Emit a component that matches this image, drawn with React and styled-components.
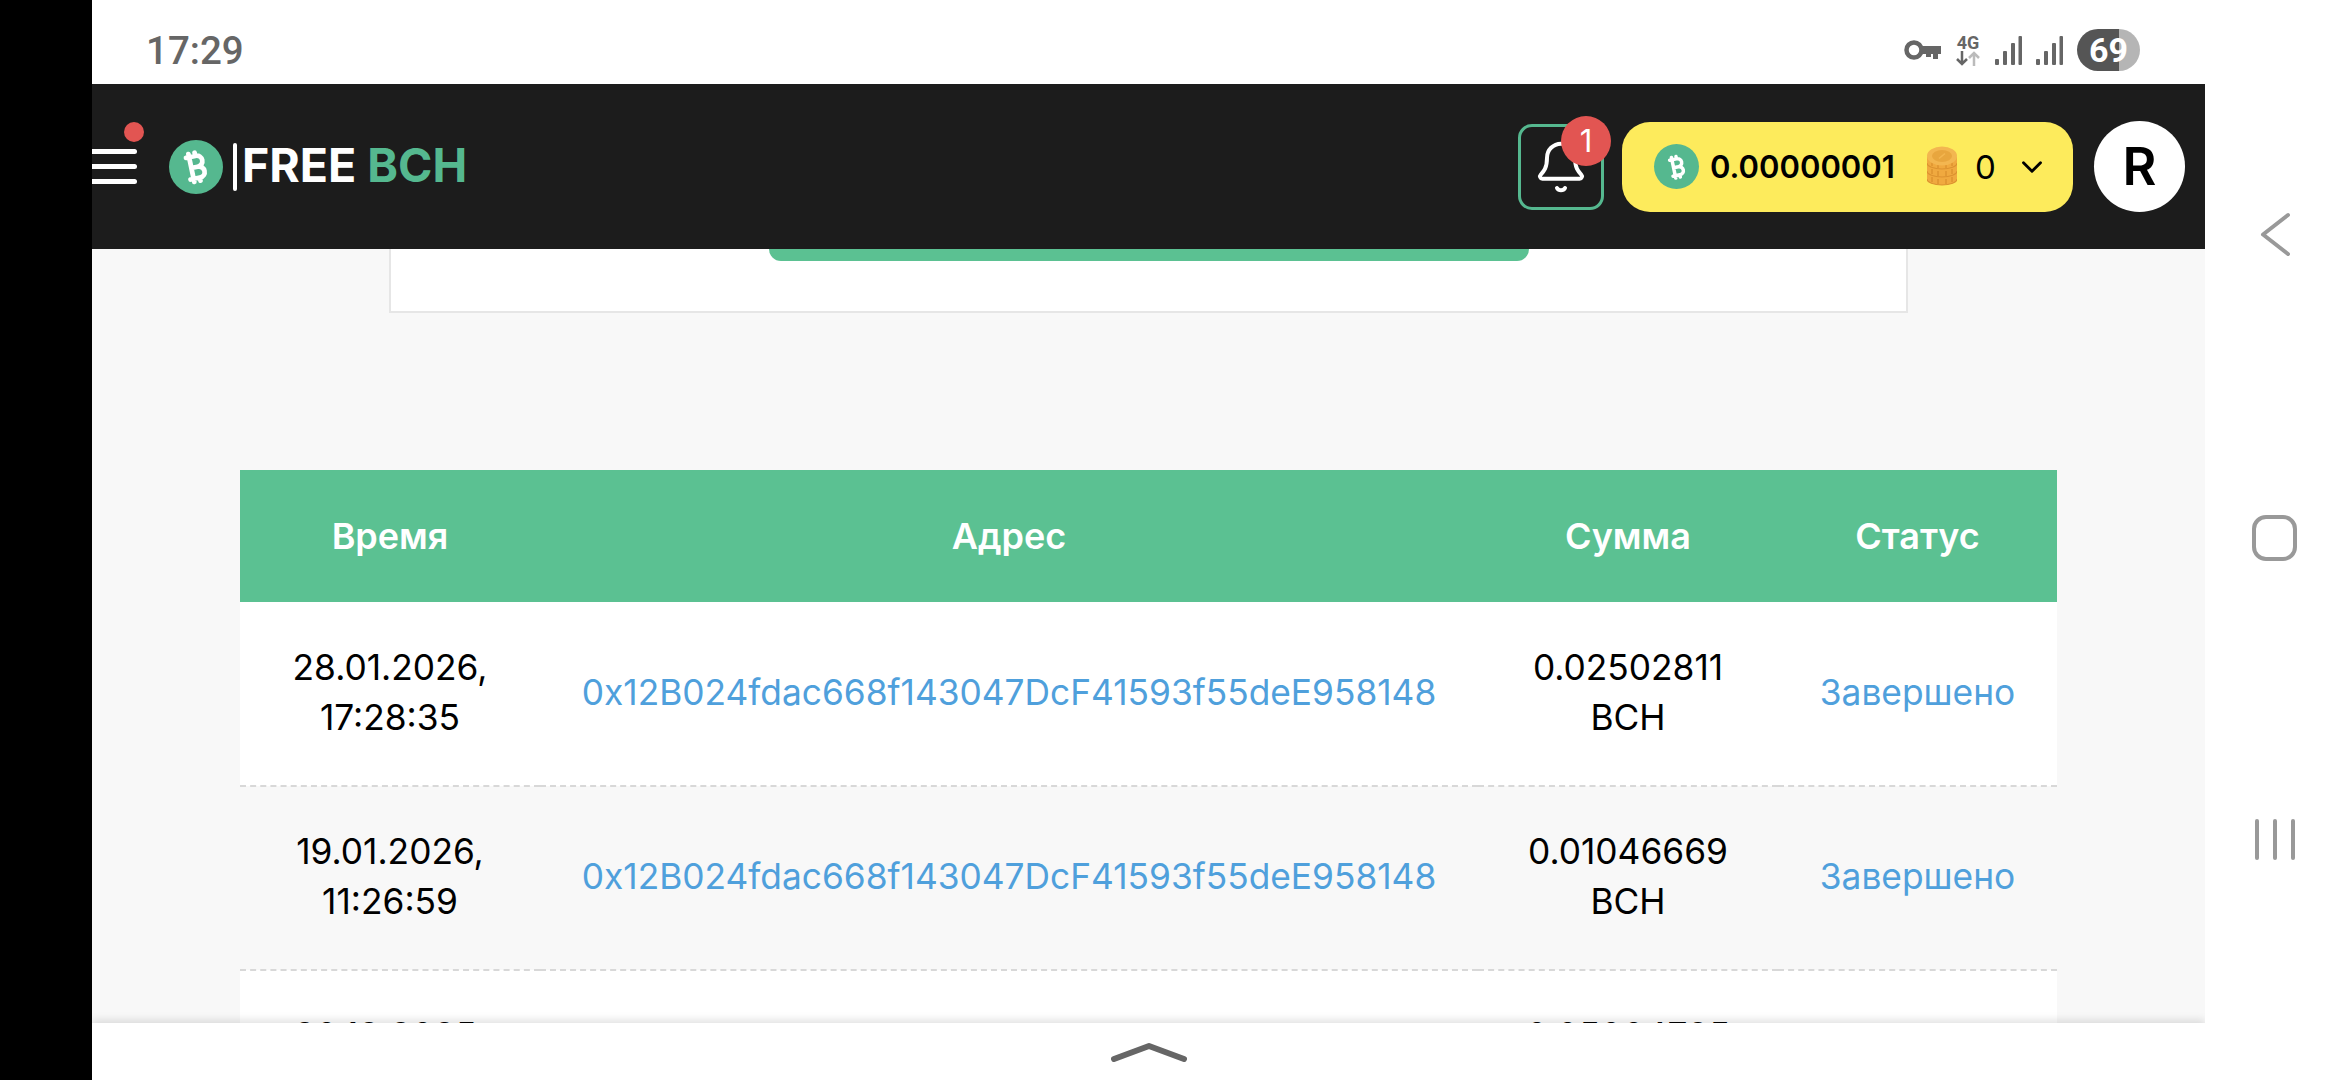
import React from "react";
import styled, { createGlobalStyle } from "styled-components";
import { Bell, ChevronDown } from "lucide-react";

const rows = [
  { date: "28.01.2026,", time: "17:28:35", amount: "0.02502811" },
  { date: "19.01.2026,", time: "11:26:59", amount: "0.01046669" },
  { date: "20.12.2025,", time: "10:12:44", amount: "0.05004785" },
];
const address = "0x12B024fdac668f143047DcF41593f55deE958148";

function BchMark({ size }) {
  return (
    <svg width={size} height={size} viewBox="0 0 24 24" fill="none" stroke="#fff" strokeWidth="3" strokeLinecap="round" strokeLinejoin="round" style={{ transform: "rotate(-22deg)" }}>
      <path d="M11.767 19.089c4.924.868 6.14-6.025 1.216-6.894m-1.216 6.894L5.86 18.047m5.908 1.042-.347 1.97m1.563-8.864c4.924.869 6.14-6.025 1.215-6.893m-1.215 6.893-3.94-.694m5.155-6.2L8.29 4.26m5.908 1.042.348-1.97M7.48 20.364l3.126-17.727" />
    </svg>
  );
}

function KeyIcon() {
  return (
    <svg width="37" height="20" viewBox="0 0 37 20" fill="none">
      <circle cx="10" cy="10" r="7.5" stroke="#666" strokeWidth="4.5" />
      <path d="M18 6h19v8h-3v5h-5v-5h-2v3h-5v-3h-4z" fill="#666" />
    </svg>
  );
}

function NetworkIcon() {
  return (
    <NetworkBox>
      <NetworkLabel>4G</NetworkLabel>
      <svg width="26" height="15" viewBox="0 0 26 15" fill="none" strokeWidth="2.5">
        <path d="M7 0v13M2 8l5 5 5-5" stroke="#666" />
        <path d="M19 15V2M14 7l5-5 5 5" stroke="#bbb" />
      </svg>
    </NetworkBox>
  );
}

function SignalIcon() {
  return (
    <svg width="27" height="29" viewBox="0 0 27 29" fill="#666">
      <rect x="0" y="23" width="4" height="6" rx="1" />
      <rect x="8" y="15" width="4" height="14" rx="1" />
      <rect x="16" y="7" width="4" height="22" rx="1" />
      <rect x="23.5" y="0" width="3.5" height="29" rx="1" />
    </svg>
  );
}

function CoinsIcon() {
  return (
    <svg width="30" height="41" viewBox="0 0 30 41">
      {[27, 19, 11].map((y) => (
        <g key={y}>
          <path d={`M0 ${y}v6a15 6 0 0 0 30 0v-6z`} fill="#f0a93f" />
          <path d={`M0 ${y + 6}a15 6 0 0 0 30 0`} fill="none" stroke="#dc9230" strokeWidth="1.2" />
          <path d={`M5 ${y + 4}v5M11 ${y + 6}v5M19 ${y + 6}v5M25 ${y + 4}v5`} stroke="#dc9230" strokeWidth="1.4" />
        </g>
      ))}
      <ellipse cx="15" cy="10" rx="15" ry="9.5" fill="#f3b650" />
      <ellipse cx="15" cy="10" rx="10" ry="6" fill="#e8a63e" />
      <path d="M12 12.5 18 7.5" stroke="#f3b650" strokeWidth="1.6" />
    </svg>
  );
}

export default function App() {
  return (
    <>
      <GlobalStyle />
      <Screen>
        <LeftStrip />
        <Main>
          <StatusBar>
            <Clock>17:29</Clock>
            <StatusIcons>
              <KeyIcon />
              <NetworkIcon />
              <SignalGroup>
                <SignalIcon />
                <SignalIcon />
              </SignalGroup>
              <Battery>69</Battery>
            </StatusIcons>
          </StatusBar>
          <Header>
            <LeftGroup>
              <Burger>
                <BurgerDot />
                <BurgerLine />
                <BurgerLine />
                <BurgerLine />
              </Burger>
              <Logo>
                <CoinCircle $size={54}>
                  <BchMark size={38} />
                </CoinCircle>
                <LogoBar />
                <LogoText>
                  FREE <LogoAccent>BCH</LogoAccent>
                </LogoText>
              </Logo>
            </LeftGroup>
            <RightGroup>
              <BellButton>
                <Bell size={56} color="#fff" strokeWidth={1.7} />
                <BellBadge>1</BellBadge>
              </BellButton>
              <Wallet>
                <CoinCircle $size={45}>
                  <BchMark size={28} />
                </CoinCircle>
                <Balance>0.00000001</Balance>
                <CoinsSlot>
                  <CoinsIcon />
                </CoinsSlot>
                <CoinCount>0</CoinCount>
                <ChevronDown size={34} color="#000" strokeWidth={2} />
              </Wallet>
              <Avatar>R</Avatar>
            </RightGroup>
          </Header>
          <Content>
            <TopCard>
              <CardButton />
            </TopCard>
            <Table>
              <colgroup>
                <col style={{ width: 300 }} />
                <col style={{ width: 938 }} />
                <col style={{ width: 300 }} />
                <col style={{ width: 279 }} />
              </colgroup>
              <thead>
                <tr>
                  <HeadCell>Время</HeadCell>
                  <HeadCell>Адрес</HeadCell>
                  <HeadCell>Сумма</HeadCell>
                  <HeadCell>Статус</HeadCell>
                </tr>
              </thead>
              <tbody>
                {rows.map((row) => (
                  <Row key={row.date}>
                    <Cell>
                      {row.date}
                      <br />
                      {row.time}
                    </Cell>
                    <Cell>
                      <CellLink>{address}</CellLink>
                    </Cell>
                    <Cell>
                      {row.amount}
                      <br />
                      BCH
                    </Cell>
                    <Cell>
                      <CellLink>Завершено</CellLink>
                    </Cell>
                  </Row>
                ))}
              </tbody>
            </Table>
          </Content>
          <BottomBar>
            <svg width="76" height="20" viewBox="0 0 76 20" fill="none">
              <path d="M3 17 38 4l35 13" stroke="#666" strokeWidth="6" strokeLinecap="round" strokeLinejoin="round" />
            </svg>
          </BottomBar>
        </Main>
        <NavBar>
          <svg width="32" height="45" viewBox="0 0 32 45" fill="none">
            <path d="M29 3 4 22.5 29 42" stroke="#999" strokeWidth="4" strokeLinecap="round" strokeLinejoin="round" />
          </svg>
          <HomeButton />
          <RecentButton>
            <RecentBar />
            <RecentBar />
            <RecentBar />
          </RecentButton>
        </NavBar>
      </Screen>
    </>
  );
}

const GlobalStyle = createGlobalStyle`
  * {
    box-sizing: border-box;
  }
  body {
    margin: 0;
    font-family: Inter, "Liberation Sans", sans-serif;
    background: #fff;
  }
`;
const Screen = styled.div`
  width: 2340px;
  height: 1080px;
  display: flex;
  overflow: hidden;
`;
const LeftStrip = styled.div`
  width: 92px;
  background: #000;
`;
const Main = styled.div`
  width: 2113px;
  display: flex;
  flex-direction: column;
`;
const StatusBar = styled.div`
  height: 84px;
  flex: none;
  display: flex;
  align-items: center;
  justify-content: space-between;
  padding: 16px 65px 0 54px;
  background: #fff;
`;
const Clock = styled.div`
  font-family: Roboto, sans-serif;
  font-weight: 500;
  font-size: 38.5px;
  color: #666;
`;
const StatusIcons = styled.div`
  display: flex;
  align-items: center;
  gap: 14px;
`;
const NetworkBox = styled.div`
  display: flex;
  flex-direction: column;
  align-items: center;
`;
const NetworkLabel = styled.div`
  font-family: Roboto, sans-serif;
  font-weight: 700;
  font-size: 18px;
  line-height: 16px;
  color: #666;
`;
const SignalGroup = styled.div`
  display: flex;
  gap: 14px;
`;
const Battery = styled.div`
  width: 63px;
  height: 42px;
  border-radius: 21px;
  background: linear-gradient(90deg, #555 67%, #b5b5b5 67%);
  color: #fff;
  font-family: Roboto, sans-serif;
  font-weight: 700;
  font-size: 34px;
  line-height: 42px;
  text-align: center;
`;
const Header = styled.header`
  height: 165px;
  flex: none;
  display: flex;
  align-items: center;
  justify-content: space-between;
  padding: 0 20px 0 0;
  background: #1c1c1c;
`;
const LeftGroup = styled.div`
  display: flex;
  align-items: center;
  gap: 32px;
`;
const Burger = styled.div`
  position: relative;
  width: 45px;
  display: flex;
  flex-direction: column;
  gap: 10px;
`;
const BurgerLine = styled.span`
  height: 5px;
  border-radius: 0 3px 3px 0;
  background: #fff;
`;
const BurgerDot = styled.span`
  position: absolute;
  top: -27px;
  right: -7px;
  width: 20px;
  height: 20px;
  border-radius: 50%;
  background: #e25552;
`;
const Logo = styled.div`
  display: flex;
  align-items: center;
`;
const CoinCircle = styled.div`
  width: ${(p) => p.$size}px;
  height: ${(p) => p.$size}px;
  flex: none;
  display: flex;
  align-items: center;
  justify-content: center;
  border-radius: 50%;
  background: #55b88f;
`;
const LogoBar = styled.span`
  width: 4px;
  height: 48px;
  margin: 0 5px 0 10px;
  border-radius: 2px;
  background: #fff;
`;
const LogoText = styled.div`
  padding-bottom: 3px;
  font-weight: 700;
  font-size: 46.5px;
  color: #fff;
`;
const LogoAccent = styled.span`
  color: #55b88f;
`;
const RightGroup = styled.div`
  display: flex;
  align-items: center;
`;
const BellButton = styled.div`
  position: relative;
  width: 86px;
  height: 86px;
  margin-right: 18px;
  display: flex;
  align-items: center;
  justify-content: center;
  border: 3px solid #55b88f;
  border-radius: 14px;
`;
const BellBadge = styled.span`
  position: absolute;
  top: -11px;
  right: -10px;
  width: 50px;
  height: 50px;
  border-radius: 50%;
  background: #e25552;
  color: #fff;
  font-size: 31px;
  line-height: 50px;
  text-align: center;
`;
const Wallet = styled.div`
  width: 451px;
  height: 90px;
  margin-right: 21px;
  display: flex;
  align-items: center;
  padding: 0 0 0 32px;
  border-radius: 28px;
  background: #fdeb5c;
`;
const Balance = styled.div`
  margin-left: 11px;
  width: 217px;
  font-weight: 600;
  font-size: 31px;
  color: #000;
`;
const CoinsSlot = styled.div`
  display: flex;
  margin-right: 18px;
`;
const CoinCount = styled.div`
  width: 40px;
  font-size: 33px;
  color: #000;
`;
const Avatar = styled.div`
  width: 91px;
  height: 91px;
  display: flex;
  align-items: center;
  justify-content: center;
  border-radius: 50%;
  background: #fff;
  color: #000;
  font-weight: 600;
  font-size: 52px;
`;
const Content = styled.main`
  flex: 1;
  min-height: 0;
  overflow: hidden;
  padding: 0 148px;
  background: #f8f8f8;
`;
const TopCard = styled.div`
  width: 1519px;
  height: 64px;
  margin: 0 0 0 149px;
  border: 2px solid #e6e6e6;
  border-top: 0;
  background: #fff;
  display: flex;
  justify-content: center;
`;
const CardButton = styled.div`
  width: 760px;
  height: 12px;
  border-radius: 0 0 12px 12px;
  background: #5bc192;
`;
const Table = styled.table`
  width: 1817px;
  margin-top: 157px;
  border-collapse: collapse;
  table-layout: fixed;
`;
const HeadCell = styled.th`
  height: 132px;
  padding: 0;
  background: #5bc192;
  color: #fff;
  font-weight: 600;
  font-size: 36px;
  text-align: center;
`;
const Row = styled.tr`
  background: #fff;
  &:nth-child(even) {
    background: #f8f8f8;
  }
`;
const Cell = styled.td`
  height: 184px;
  padding: 0 0 2px;
  border-bottom: 2px dashed #d8d8d8;
  color: #000;
  font-size: 35.3px;
  line-height: 50px;
  text-align: center;
`;
const CellLink = styled.span`
  color: #4fa0dc;
`;
const BottomBar = styled.div`
  position: relative;
  height: 57px;
  flex: none;
  display: flex;
  align-items: flex-start;
  justify-content: center;
  padding-top: 19px;
  background: #fff;
  box-shadow: 0 -3px 8px rgba(0, 0, 0, 0.12);
`;
const NavBar = styled.nav`
  position: relative;
  z-index: 1;
  width: 135px;
  display: flex;
  flex-direction: column;
  align-items: center;
  gap: 258px;
  padding: 212px 0 0 4px;
  background: #fff;
`;
const HomeButton = styled.div`
  width: 45px;
  height: 46px;
  border: 4px solid #999;
  border-radius: 14px;
`;
const RecentButton = styled.div`
  display: flex;
  gap: 14px;
`;
const RecentBar = styled.span`
  width: 4px;
  height: 41px;
  border-radius: 2px;
  background: #999;
`;
